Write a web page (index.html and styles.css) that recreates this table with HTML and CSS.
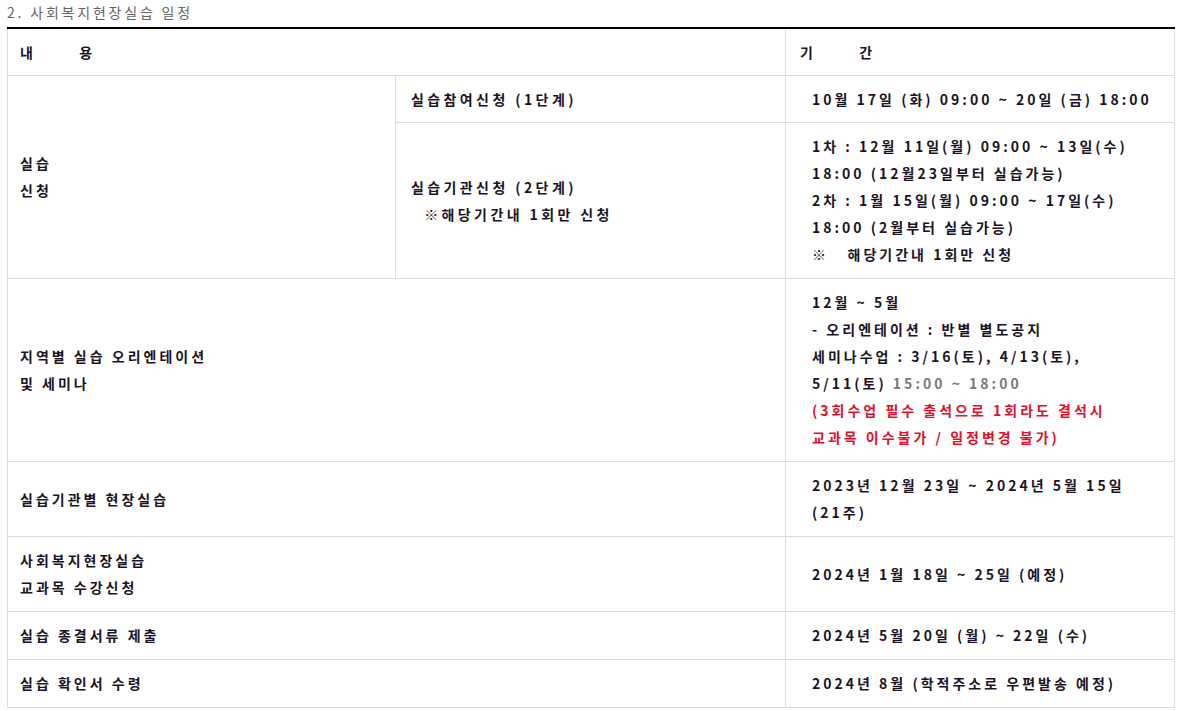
FILE: index.html
```html
<!DOCTYPE html>
<html>

<head>
    <meta charset="utf-8">
    <link rel="stylesheet" href="styles.css">
</head>

<body>
    <p class="sub_title">2. 사회복지현장실습 일정</p>
    <table class="schedule">
        <colgroup>
            <col class="col_a">
            <col class="col_b">
            <col class="col_c">
        </colgroup>
        <tr class="head">
            <td colspan="2">내&nbsp;&nbsp;&nbsp;&nbsp;&nbsp;&nbsp;&nbsp;용</td>
            <td>기&nbsp;&nbsp;&nbsp;&nbsp;&nbsp;&nbsp;&nbsp;간</td>
        </tr>
        <tr class="short">
            <td rowspan="2">실습<br>신청</td>
            <td class="sub">실습참여신청 (1단계)</td>
            <td class="date">10월 17일 (화) 09:00 ~ 20일 (금) 18:00</td>
        </tr>
        <tr>
            <td class="sub">실습기관신청 (2단계)<br>&nbsp;&nbsp;※해당기간내 1회만 신청</td>
            <td class="date">1차 : 12월 11일(월) 09:00 ~ 13일(수)<br>18:00 (12월23일부터 실습가능)<br>2차 : 1월 15일(월) 09:00 ~ 17일(수)<br>18:00 (2월부터 실습가능)<br>※&nbsp;&nbsp;&nbsp;해당기간내 1회만 신청</td>
        </tr>
        <tr>
            <td colspan="2">지역별 실습 오리엔테이션<br>및 세미나</td>
            <td class="date">12월 ~ 5월<br>- 오리엔테이션 : 반별 별도공지<br>세미나수업 : 3/16(토), 4/13(토),<br>5/11(토) <span class="gray">15:00 ~ 18:00</span><br><span class="red">(3회수업 필수 출석으로 1회라도 결석시<br>교과목 이수불가 / 일정변경 불가)</span></td>
        </tr>
        <tr>
            <td colspan="2">실습기관별 현장실습</td>
            <td class="date">2023년 12월 23일 ~ 2024년 5월 15일<br>(21주)</td>
        </tr>
        <tr class="short">
            <td colspan="2">사회복지현장실습<br>교과목 수강신청</td>
            <td class="date">2024년 1월 18일 ~ 25일 (예정)</td>
        </tr>
        <tr>
            <td colspan="2">실습 종결서류 제출</td>
            <td class="date">2024년 5월 20일 (월) ~ 22일 (수)</td>
        </tr>
        <tr>
            <td colspan="2">실습 확인서 수령</td>
            <td class="date">2024년 8월 (학적주소로 우편발송 예정)</td>
        </tr>
    </table>
</body>

</html>
```

FILE: styles.css
```css
body {
    margin: 0 4px 0 7px;
    background-color: white;
    font-family: "Noto Sans CJK KR", "Noto Sans", sans-serif;
}

.sub_title {
    margin: 3px 0 6px 0;
    color: #666666;
    font-size: 14px;
    letter-spacing: 2.8px;
    line-height: 18px;
}

.schedule {
    width: 1167px;
    border-collapse: collapse;
    table-layout: fixed;
    border-top: 2px solid black;
}

.col_a {
    width: 388px;
}

.col_b {
    width: 390px;
}

.col_c {
    width: 389px;
}

.schedule td {
    border: 1px solid #dcdcdc;
    padding: 10px 12px;
    color: #1c1424;
    font-size: 14px;
    font-weight: bold;
    letter-spacing: 3px;
    line-height: 27px;
    vertical-align: middle;
}

.schedule tr.head td,
.schedule tr.short td.sub,
.schedule tr.short td.date {
    padding-bottom: 9px;
}

.schedule tr.head td {
    border-top: none;
}

.schedule td.sub {
    padding-left: 15px;
    letter-spacing: 3.4px;
}

.schedule td.date {
    padding-left: 26px;
}

.schedule tr.head td:last-child {
    padding-left: 14px;
}

.gray {
    color: #7a7a7a;
}

.red {
    color: #e0102c;
}
```
